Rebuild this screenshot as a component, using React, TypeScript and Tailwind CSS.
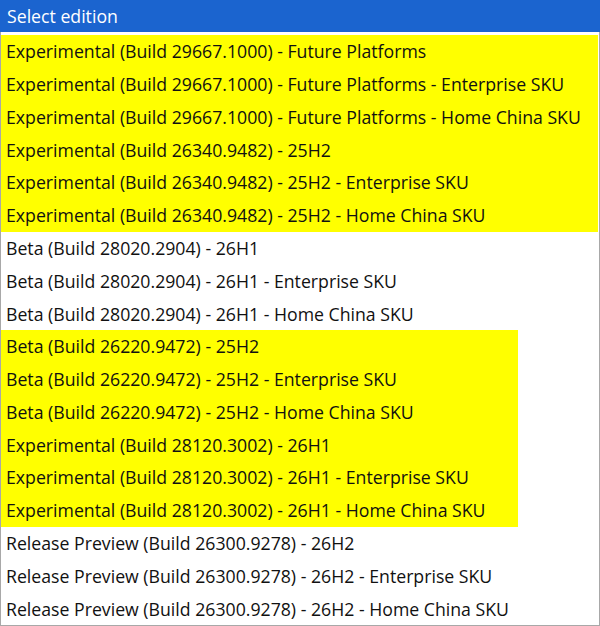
const editions: { label: string; hl?: "wide" | "narrow" }[] = [
  { label: "Experimental (Build 29667.1000) - Future Platforms", hl: "wide" },
  { label: "Experimental (Build 29667.1000) - Future Platforms - Enterprise SKU", hl: "wide" },
  { label: "Experimental (Build 29667.1000) - Future Platforms - Home China SKU", hl: "wide" },
  { label: "Experimental (Build 26340.9482) - 25H2", hl: "wide" },
  { label: "Experimental (Build 26340.9482) - 25H2 - Enterprise SKU", hl: "wide" },
  { label: "Experimental (Build 26340.9482) - 25H2 - Home China SKU", hl: "wide" },
  { label: "Beta (Build 28020.2904) - 26H1" },
  { label: "Beta (Build 28020.2904) - 26H1 - Enterprise SKU" },
  { label: "Beta (Build 28020.2904) - 26H1 - Home China SKU" },
  { label: "Beta (Build 26220.9472) - 25H2", hl: "narrow" },
  { label: "Beta (Build 26220.9472) - 25H2 - Enterprise SKU", hl: "narrow" },
  { label: "Beta (Build 26220.9472) - 25H2 - Home China SKU", hl: "narrow" },
  { label: "Experimental (Build 28120.3002) - 26H1", hl: "narrow" },
  { label: "Experimental (Build 28120.3002) - 26H1 - Enterprise SKU", hl: "narrow" },
  { label: "Experimental (Build 28120.3002) - 26H1 - Home China SKU", hl: "narrow" },
  { label: "Release Preview (Build 26300.9278) - 26H2" },
  { label: "Release Preview (Build 26300.9278) - 26H2 - Enterprise SKU" },
  { label: "Release Preview (Build 26300.9278) - 26H2 - Home China SKU" },
];

export default function App() {
  return (
    <div
      className="flex h-[626px] w-[600px] flex-col overflow-hidden bg-white text-[17.7px] text-[#111]"
      style={{ fontFamily: '"Open Sans", "Noto Sans", sans-serif' }}
    >
      <div className="flex h-[32px] shrink-0 items-center bg-[#1b64cf] px-[7px] pt-[1px] text-white">
        Select edition
      </div>
      <div className="flex flex-1 flex-col border-b-2 border-l border-r border-[#a8a8a8] pt-[3px]">
        {editions.map((e) => (
          <div
            key={e.label}
            className={`flex h-[32.8px] items-center whitespace-nowrap pl-[5px] ${
              e.hl === "wide"
                ? "w-[597px] bg-[#ffff00]"
                : e.hl === "narrow"
                  ? "w-[517px] bg-[#ffff00]"
                  : ""
            }`}
          >
            {e.label}
          </div>
        ))}
      </div>
    </div>
  );
}
